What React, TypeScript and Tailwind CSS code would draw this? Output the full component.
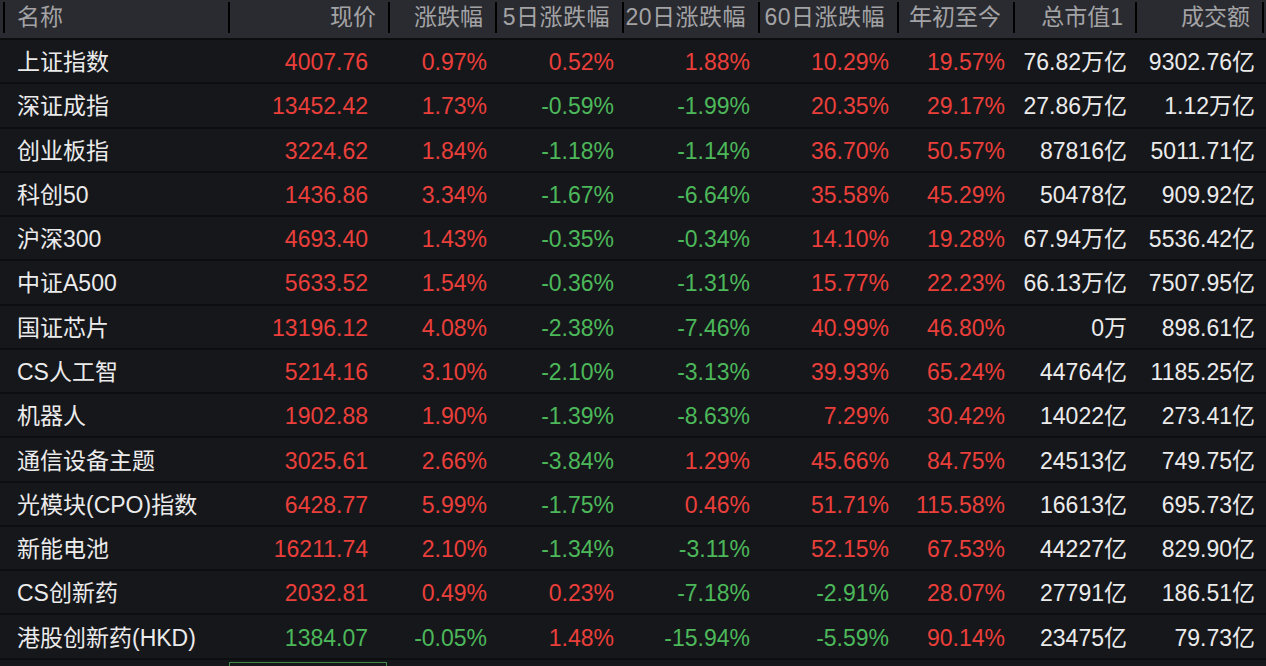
import React from 'react'

const rows: string[][] = [
    ['上证指数', '4007.76', '0.97%', '0.52%', '1.88%', '10.29%', '19.57%', '76.82万亿', '9302.76亿'],
    ['深证成指', '13452.42', '1.73%', '-0.59%', '-1.99%', '20.35%', '29.17%', '27.86万亿', '1.12万亿'],
    ['创业板指', '3224.62', '1.84%', '-1.18%', '-1.14%', '36.70%', '50.57%', '87816亿', '5011.71亿'],
    ['科创50', '1436.86', '3.34%', '-1.67%', '-6.64%', '35.58%', '45.29%', '50478亿', '909.92亿'],
    ['沪深300', '4693.40', '1.43%', '-0.35%', '-0.34%', '14.10%', '19.28%', '67.94万亿', '5536.42亿'],
    ['中证A500', '5633.52', '1.54%', '-0.36%', '-1.31%', '15.77%', '22.23%', '66.13万亿', '7507.95亿'],
    ['国证芯片', '13196.12', '4.08%', '-2.38%', '-7.46%', '40.99%', '46.80%', '0万', '898.61亿'],
    ['CS人工智', '5214.16', '3.10%', '-2.10%', '-3.13%', '39.93%', '65.24%', '44764亿', '1185.25亿'],
    ['机器人', '1902.88', '1.90%', '-1.39%', '-8.63%', '7.29%', '30.42%', '14022亿', '273.41亿'],
    ['通信设备主题', '3025.61', '2.66%', '-3.84%', '1.29%', '45.66%', '84.75%', '24513亿', '749.75亿'],
    ['光模块(CPO)指数', '6428.77', '5.99%', '-1.75%', '0.46%', '51.71%', '115.58%', '16613亿', '695.73亿'],
    ['新能电池', '16211.74', '2.10%', '-1.34%', '-3.11%', '52.15%', '67.53%', '44227亿', '829.90亿'],
    ['CS创新药', '2032.81', '0.49%', '0.23%', '-7.18%', '-2.91%', '28.07%', '27791亿', '186.51亿'],
    ['港股创新药(HKD)', '1384.07', '-0.05%', '1.48%', '-15.94%', '-5.59%', '90.14%', '23475亿', '79.73亿'],
]

const headers = ['名称', '现价', '涨跌幅', '5日涨跌幅', '20日涨跌幅', '60日涨跌幅', '年初至今', '总市值1', '成交额']

const grid = 'grid grid-cols-[3px_225px_160px_107px_127px_136px_139px_116px_122px_127px_1fr]'

const red = 'text-[#ea3f3a]'
const green = 'text-[#4cb85a]'

function tone(v: string) {
    return v.startsWith('-') ? green : red
}

export default function App() {
    return (
        <div className="w-[1266px] h-[666px] overflow-hidden bg-[#16171b] font-['Liberation_Sans','Noto_Sans_CJK_SC',sans-serif] text-[23px] leading-none">
            {/* Header */}
            <div className={`${grid} h-[40px] bg-[#2a2b30] border-b-2 border-[#0c0d0f] text-[#a3a3a6]`}>
                <div />
                {headers.map((h, i) => (
                    <div key={h} className="flex h-full">
                        <div className="w-[2px] h-[31px] mt-[2px] bg-black shrink-0" />
                        <div
                            className={`flex-1 min-w-0 overflow-hidden whitespace-nowrap flex items-center pb-[3px] ${
                                i === 0 ? 'pl-[12px]' : 'justify-end pl-[9px] pr-[12px]'
                            }`}
                        >
                            <span className={i >= 3 && i <= 5 ? 'mr-auto tracking-[0.5px]' : ''}>{h}</span>
                        </div>
                    </div>
                ))}
                <div className="flex h-full">
                    <div className="w-[2px] h-[31px] mt-[2px] bg-black" />
                </div>
            </div>

            {/* Rows */}
            {rows.map((r) => (
                <div key={r[0]} className={`${grid} h-[44.27px] pt-[3px] border-b-2 border-[#0d0e10] items-center`}>
                    <div />
                    <div className="pl-[14px] text-[#ebebeb] whitespace-nowrap">{r[0]}</div>
                    <div className={`text-right pr-[20px] ${tone(r[2])}`}>{r[1]}</div>
                    {r.slice(2, 7).map((v, j) => (
                        <div key={j} className={`text-right pr-[8px] ${tone(v)}`}>
                            {v}
                        </div>
                    ))}
                    <div className="text-right pr-[8px] text-[#ebebeb] whitespace-nowrap">{r[7]}</div>
                    <div className="text-right pr-[7px] text-[#ebebeb] whitespace-nowrap">{r[8]}</div>
                    <div />
                </div>
            ))}

            {/* Partial next row with focused cell */}
            <div className={`${grid} h-[44px]`}>
                <div />
                <div />
                <div className="mt-[2px] ml-[1px] mr-[1px] h-[40px] border border-[#3d8b45]" />
            </div>
        </div>
    )
}
